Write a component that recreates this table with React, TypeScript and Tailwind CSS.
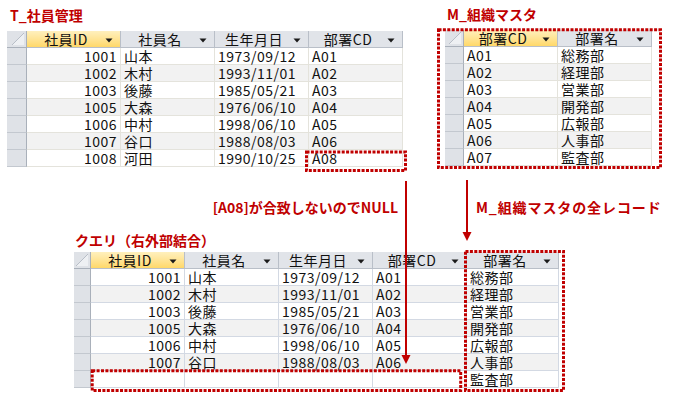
import React from "react";

type Col = { label: string; w: number; sel?: boolean; right?: boolean };

const FONT = "font-['Noto_Sans_CJK_JP','Noto_Sans',sans-serif]";

function DropArrow() {
  return (
    <svg width="8" height="5" viewBox="0 0 8 5" className="mr-[7px] mt-[3px] shrink-0">
      <polygon points="0.5,0.5 7.5,0.5 4,4.5" fill="#1a1a1a" />
    </svg>
  );
}

function Corner({ w }: { w: number }) {
  return (
    <div
      className="h-[17px] bg-[#dfe2e7] border-r border-b border-[#a9b0ba] flex items-start justify-end shrink-0"
      style={{ width: w }}
    >
      <svg width="14" height="14" viewBox="0 0 14 14" className="mt-[1px] mr-[1px]">
        <polygon points="1,13 13,1 13,13" fill="#eef0f3" />
        <line x1="1" y1="13" x2="13" y2="1" stroke="#b8bec7" strokeWidth="1" />
      </svg>
    </div>
  );
}

function Table({
  cols,
  rows,
  selW,
  line,
}: {
  cols: Col[];
  rows: string[][];
  selW: number;
  line: string;
}) {
  return (
    <div className="flex flex-col">
      <div className="flex">
        <Corner w={selW} />
        {cols.map((c, i) => (
          <div
            key={i}
            className={
              "h-[17px] flex items-center border-r border-b border-[#b9bfc8] shrink-0 " +
              (c.sel
                ? "bg-gradient-to-b from-[#fff0bd] to-[#ffd868]"
                : "bg-[#e1e4e9]")
            }
            style={{ width: c.w }}
          >
            <span className="flex-1 text-center text-[14px] leading-[16px] tracking-[0.5px] text-[#111] whitespace-nowrap">
              {c.label}
            </span>
            <DropArrow />
          </div>
        ))}
      </div>
      {rows.map((r, ri) => (
        <div key={ri} className="flex">
          <div
            className="h-[17px] bg-[#dfe2e7] border-r border-b border-r-[#a9b0ba] border-b-[#c3c8cf] shrink-0"
            style={{ width: selW }}
          />
          {cols.map((c, ci) => (
            <div
              key={ci}
              className={
                "h-[17px] border-r border-b whitespace-nowrap text-[14px] leading-[16px] tracking-[0.5px] text-[#111] px-[3px] shrink-0 " +
                (ri % 2 === 0 ? "bg-white " : "bg-[#f2f2f2] ") +
                (c.right ? "text-right" : "text-left")
              }
              style={{ width: c.w, borderColor: line }}
            >
              {r[ci]}
            </div>
          ))}
        </div>
      ))}
    </div>
  );
}

const t1Rows = [
  ["1001", "山本", "1973/09/12", "A01"],
  ["1002", "木村", "1993/11/01", "A02"],
  ["1003", "後藤", "1985/05/21", "A03"],
  ["1005", "大森", "1976/06/10", "A04"],
  ["1006", "中村", "1998/06/10", "A05"],
  ["1007", "谷口", "1988/08/03", "A06"],
  ["1008", "河田", "1990/10/25", "A08"],
];

const t2Rows = [
  ["A01", "総務部"],
  ["A02", "経理部"],
  ["A03", "営業部"],
  ["A04", "開発部"],
  ["A05", "広報部"],
  ["A06", "人事部"],
  ["A07", "監査部"],
];

const qRows = [
  ["1001", "山本", "1973/09/12", "A01", "総務部"],
  ["1002", "木村", "1993/11/01", "A02", "経理部"],
  ["1003", "後藤", "1985/05/21", "A03", "営業部"],
  ["1005", "大森", "1976/06/10", "A04", "開発部"],
  ["1006", "中村", "1998/06/10", "A05", "広報部"],
  ["1007", "谷口", "1988/08/03", "A06", "人事部"],
  ["", "", "", "", "監査部"],
];

const empCols: Col[] = [
  { label: "社員ID", w: 94, sel: true, right: true },
  { label: "社員名", w: 94 },
  { label: "生年月日", w: 94 },
  { label: "部署CD", w: 94 },
];

const RED = "#c00000";

function Overlay() {
  const dots = { stroke: RED, strokeWidth: 3, strokeDasharray: "3 1.4", fill: "none" };
  return (
    <svg
      width="685"
      height="394"
      viewBox="0 0 685 394"
      className="absolute left-0 top-0 pointer-events-none"
    >
      <rect x="306.5" y="152" width="99" height="18.5" {...dots} />
      <rect x="438.5" y="29.8" width="222" height="137.7" {...dots} />
      <rect x="92.2" y="370.8" width="368.5" height="19.8" {...dots} />
      <rect x="465.5" y="251.5" width="98" height="139" {...dots} />
      <line x1="406" y1="181" x2="406" y2="357" stroke={RED} strokeWidth="2" />
      <polygon points="401.5,355 410.5,355 406,364" fill={RED} />
      <line x1="467" y1="180" x2="467" y2="233" stroke={RED} strokeWidth="2" />
      <polygon points="462.5,232 471.5,232 467,241" fill={RED} />
    </svg>
  );
}

export default function App() {
  return (
    <div className={"relative w-[685px] h-[394px] bg-white overflow-hidden " + FONT}>
      <div className="flex items-start">
        <div className="ml-[7px] flex flex-col">
          <div className="h-[31px] pl-[3px] pt-[7px] text-[14px] leading-[17px] font-bold text-[#c00000]">
            T_社員管理
          </div>
          <Table cols={empCols} rows={t1Rows} selW={20} line="#e4e3dc" />
        </div>
        <div className="ml-[42px] flex flex-col">
          <div className="h-[30px] pl-[2px] pt-[6px] text-[14px] leading-[17px] font-bold text-[#c00000]">
            M_組織マスタ
          </div>
          <Table
            cols={[
              { label: "部署CD", w: 94, sel: true },
              { label: "部署名", w: 94 },
            ]}
            rows={t2Rows}
            selW={19}
            line="#e4e3dc"
          />
        </div>
      </div>

      <div className="flex mt-[32px] text-[14px] leading-[17px] font-bold text-[#c00000]">
        <div className="w-[398px] text-right">[A08]が合致しないのでNULL</div>
        <div className="ml-[78px] tracking-[0.9px]">M_組織マスタの全レコード</div>
      </div>

      <div className="ml-[74px] flex flex-col">
        <div className="h-[36px] pl-[1px] pt-[16px] text-[14px] leading-[17px] font-bold text-[#c00000]">
          クエリ（右外部結合）
        </div>
        <Table
          cols={[
            { label: "社員ID", w: 94, sel: true, right: true },
            { label: "社員名", w: 94 },
            { label: "生年月日", w: 94 },
            { label: "部署CD", w: 94 },
            { label: "部署名", w: 92 },
          ]}
          rows={qRows}
          selW={17}
          line="#d3d9e3"
        />
      </div>

      <Overlay />
    </div>
  );
}
